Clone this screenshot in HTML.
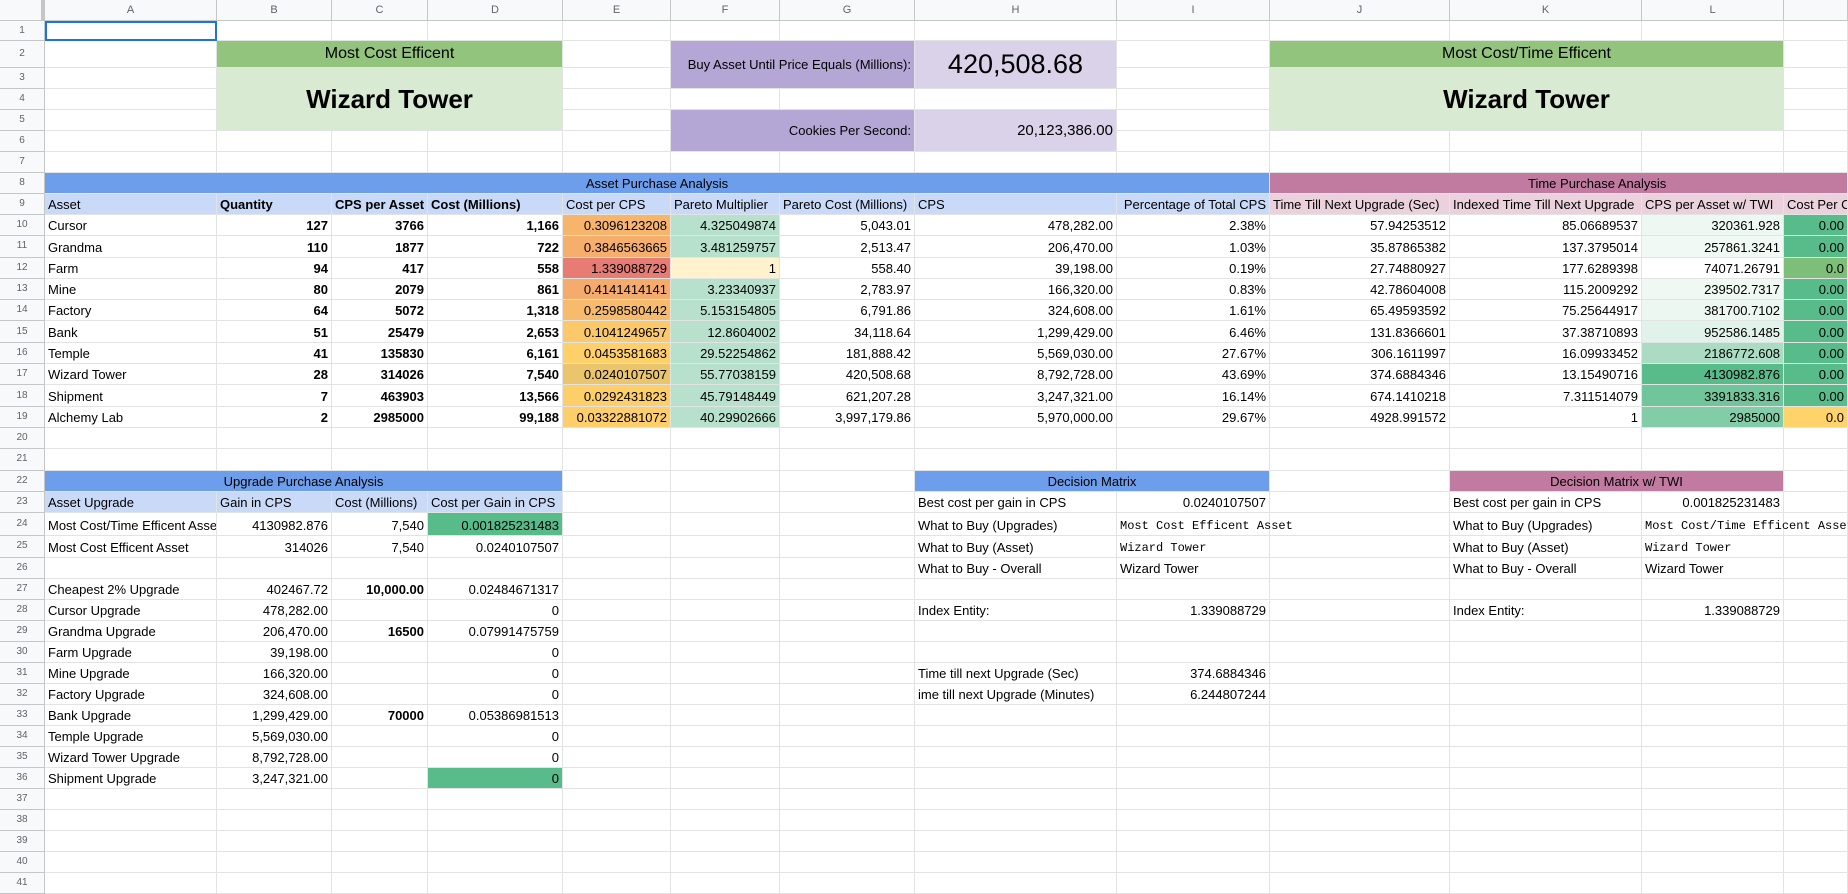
<!DOCTYPE html>
<html><head><meta charset="utf-8"><style>
*{margin:0;padding:0;box-sizing:border-box}
body{width:1848px;height:888px;overflow:hidden;background:#fff;font-family:"Liberation Sans",Arial,sans-serif;font-size:13px;color:#000}
.g{display:grid;grid-template-columns:45px 172px 115px 96px 135px 108px 109px 135px 202px 153px 180px 192px 142px 64px;
grid-template-rows:21px 20px 27px 21px 21px 21px 21px 21px 21px 21px repeat(14,21.3px) 22.5px 22.5px repeat(16,21px);width:1848px}
.g>div{border-right:1px solid #e2e3e3;border-bottom:1px solid #e2e3e3;white-space:nowrap;overflow:hidden;padding:0 3px 3px;display:flex;align-items:flex-end;line-height:1}
.h{background:#f8f9fa;color:#5f6368;justify-content:center;font-size:11px;border-color:#c4c7c5!important;align-items:center!important;padding:0!important}
.rh{background:#f8f9fa;color:#5f6368;justify-content:center;font-size:10px;border-color:#c4c7c5!important;align-items:center!important;padding:0!important}
.r{justify-content:flex-end}
.c{justify-content:center}
.vc{align-items:center!important;padding-bottom:0!important}
.b{font-weight:bold}
.m{font-family:"Liberation Mono",monospace;font-size:12px}
.ov{overflow:visible!important;position:relative;z-index:2}
.bl{background:#6d9eeb}.lb{background:#c9daf8}.pk{background:#c27ba0}.lp{background:#ead1dc}
.gr{background:#93c47d}.lg{background:#d9ead3}.pu{background:#b4a7d6}.lpu{background:#d9d2e9}
.G{background:#57bb8a}
</style></head><body><div class="g">
<div class="h" style="border-right:4px solid #c4c7c5"></div><div class="h">A</div><div class="h">B</div><div class="h">C</div><div class="h">D</div><div class="h">E</div><div class="h">F</div><div class="h">G</div><div class="h">H</div><div class="h">I</div><div class="h">J</div><div class="h">K</div><div class="h">L</div><div class="h"></div>

<div class="rh">1</div><div style="border:2px solid #1a73e8"></div><div></div><div></div><div></div><div></div><div></div><div></div><div></div><div></div><div></div><div></div><div></div><div></div>

<div class="rh">2</div><div></div><div class="gr c vc" style="grid-column:span 3;font-size:16px">Most Cost Efficent</div><div></div><div class="pu r vc" style="grid-column:span 2;grid-row:span 2;font-size:13px">Buy Asset Until Price Equals (Millions):</div><div class="lpu c vc" style="grid-row:span 2;font-size:27px">420,508.68</div><div></div><div class="gr c vc" style="grid-column:span 3;font-size:16px">Most Cost/Time Efficent</div><div></div>

<div class="rh">3</div><div></div><div class="lg c b vc" style="grid-column:span 3;grid-row:span 3;font-size:26px">Wizard Tower</div><div></div><div></div><div class="lg c b vc" style="grid-column:span 3;grid-row:span 3;font-size:26px">Wizard Tower</div><div></div>

<div class="rh">4</div><div></div><div></div><div></div><div></div><div></div><div></div><div></div>

<div class="rh">5</div><div></div><div></div><div class="pu r vc" style="grid-column:span 2;grid-row:span 2">Cookies Per Second:</div><div class="lpu r vc" style="grid-row:span 2;font-size:15px">20,123,386.00</div><div></div><div></div>

<div class="rh">6</div><div></div><div></div><div></div><div></div><div></div><div></div><div></div><div></div><div></div><div></div>

<div class="rh">7</div><div></div><div></div><div></div><div></div><div></div><div></div><div></div><div></div><div></div><div></div><div></div><div></div><div></div>

<div class="rh">8</div><div class="bl c" style="grid-column:span 9">Asset Purchase Analysis</div><div class="pk" style="grid-column:span 4;padding-left:258px">Time Purchase Analysis</div>

<div class="rh">9</div><div class="lb">Asset</div><div class="lb b">Quantity</div><div class="lb b">CPS per Asset</div><div class="lb b">Cost (Millions)</div><div class="lb">Cost per CPS</div><div class="lb">Pareto Multiplier</div><div class="lb">Pareto Cost (Millions)</div><div class="lb">CPS</div><div class="lb r">Percentage of Total CPS</div><div class="lp">Time Till Next Upgrade (Sec)</div><div class="lp">Indexed Time Till Next Upgrade</div><div class="lp">CPS per Asset w/ TWI</div><div class="lp">Cost Per C</div>

<div class="rh">10</div><div>Cursor</div><div class="r b">127</div><div class="r b">3766</div><div class="r b">1,166</div><div class="r" style="background:#f7b56b">0.3096123208</div><div class="r" style="background:#b7e1cd">4.325049874</div><div class="r">5,043.01</div><div class="r">478,282.00</div><div class="r">2.38%</div><div class="r">57.94253512</div><div class="r">85.06689537</div><div class="r" style="background:#eef8f3">320361.928</div><div class="r G">0.00</div>
<div class="rh">11</div><div>Grandma</div><div class="r b">110</div><div class="r b">1877</div><div class="r b">722</div><div class="r" style="background:#f5ae6b">0.3846563665</div><div class="r" style="background:#b7e1cd">3.481259757</div><div class="r">2,513.47</div><div class="r">206,470.00</div><div class="r">1.03%</div><div class="r">35.87865382</div><div class="r">137.3795014</div><div class="r" style="background:#f1f9f5">257861.3241</div><div class="r G">0.00</div>
<div class="rh">12</div><div>Farm</div><div class="r b">94</div><div class="r b">417</div><div class="r b">558</div><div class="r" style="background:#e67c73">1.339088729</div><div class="r" style="background:#fff2cc">1</div><div class="r">558.40</div><div class="r">39,198.00</div><div class="r">0.19%</div><div class="r">27.74880927</div><div class="r">177.6289398</div><div class="r">74071.26791</div><div class="r" style="background:#7dbf78">0.0</div>
<div class="rh">13</div><div>Mine</div><div class="r b">80</div><div class="r b">2079</div><div class="r b">861</div><div class="r" style="background:#f5ab6b">0.4141414141</div><div class="r" style="background:#b7e1cd">3.23340937</div><div class="r">2,783.97</div><div class="r">166,320.00</div><div class="r">0.83%</div><div class="r">42.78604008</div><div class="r">115.2009292</div><div class="r" style="background:#f0f8f4">239502.7317</div><div class="r G">0.00</div>
<div class="rh">14</div><div>Factory</div><div class="r b">64</div><div class="r b">5072</div><div class="r b">1,318</div><div class="r" style="background:#f8bb6b">0.2598580442</div><div class="r" style="background:#b7e1cd">5.153154805</div><div class="r">6,791.86</div><div class="r">324,608.00</div><div class="r">1.61%</div><div class="r">65.49593592</div><div class="r">75.25644917</div><div class="r" style="background:#edf7f2">381700.7102</div><div class="r G">0.00</div>
<div class="rh">15</div><div>Bank</div><div class="r b">51</div><div class="r b">25479</div><div class="r b">2,653</div><div class="r" style="background:#fcc96a">0.1041249657</div><div class="r" style="background:#b7e1cd">12.8604002</div><div class="r">34,118.64</div><div class="r">1,299,429.00</div><div class="r">6.46%</div><div class="r">131.8366601</div><div class="r">37.38710893</div><div class="r" style="background:#e0f2e9">952586.1485</div><div class="r G">0.00</div>
<div class="rh">16</div><div>Temple</div><div class="r b">41</div><div class="r b">135830</div><div class="r b">6,161</div><div class="r" style="background:#fed06a">0.0453581683</div><div class="r" style="background:#b7e1cd">29.52254862</div><div class="r">181,888.42</div><div class="r">5,569,030.00</div><div class="r">27.67%</div><div class="r">306.1611997</div><div class="r">16.09933452</div><div class="r" style="background:#abdbc3">2186772.608</div><div class="r G">0.00</div>
<div class="rh">17</div><div>Wizard Tower</div><div class="r b">28</div><div class="r b">314026</div><div class="r b">7,540</div><div class="r" style="background:#eac56c">0.0240107507</div><div class="r" style="background:#b7e1cd">55.77038159</div><div class="r">420,508.68</div><div class="r">8,792,728.00</div><div class="r">43.69%</div><div class="r">374.6884346</div><div class="r">13.15490716</div><div class="r" style="background:#57bb8a">4130982.876</div><div class="r G">0.00</div>
<div class="rh">18</div><div>Shipment</div><div class="r b">7</div><div class="r b">463903</div><div class="r b">13,566</div><div class="r" style="background:#fecf69">0.0292431823</div><div class="r" style="background:#b7e1cd">45.79148449</div><div class="r">621,207.28</div><div class="r">3,247,321.00</div><div class="r">16.14%</div><div class="r">674.1410218</div><div class="r">7.311514079</div><div class="r" style="background:#70c59b">3391833.316</div><div class="r G">0.00</div>
<div class="rh">19</div><div>Alchemy Lab</div><div class="r b">2</div><div class="r b">2985000</div><div class="r b">99,188</div><div class="r" style="background:#fdce69">0.03322881072</div><div class="r" style="background:#b7e1cd">40.29902666</div><div class="r">3,997,179.86</div><div class="r">5,970,000.00</div><div class="r">29.67%</div><div class="r">4928.991572</div><div class="r">1</div><div class="r" style="background:#82cca7">2985000</div><div class="r" style="background:#fed36a">0.0</div>

<div class="rh">20</div><div></div><div></div><div></div><div></div><div></div><div></div><div></div><div></div><div></div><div></div><div></div><div></div><div></div>
<div class="rh">21</div><div></div><div></div><div></div><div></div><div></div><div></div><div></div><div></div><div></div><div></div><div></div><div></div><div></div>

<div class="rh">22</div><div class="bl c" style="grid-column:span 4">Upgrade Purchase Analysis</div><div></div><div></div><div></div><div class="bl c" style="grid-column:span 2">Decision Matrix</div><div></div><div class="pk c" style="grid-column:span 2">Decision Matrix w/ TWI</div><div></div>
<div class="rh">23</div><div class="lb">Asset Upgrade</div><div class="lb">Gain in CPS</div><div class="lb">Cost (Millions)</div><div class="lb">Cost per Gain in CPS</div><div></div><div></div><div></div><div>Best cost per gain in CPS</div><div class="r">0.0240107507</div><div></div><div>Best cost per gain in CPS</div><div class="r">0.001825231483</div><div></div>
<div class="rh">24</div><div>Most Cost/Time Efficent Asset</div><div class="r">4130982.876</div><div class="r">7,540</div><div class="r G">0.001825231483</div><div></div><div></div><div></div><div>What to Buy (Upgrades)</div><div class="m ov">Most Cost Efficent Asset</div><div></div><div>What to Buy (Upgrades)</div><div class="m ov">Most Cost/Time Efficent Asset</div><div></div>
<div class="rh">25</div><div>Most Cost Efficent Asset</div><div class="r">314026</div><div class="r">7,540</div><div class="r">0.0240107507</div><div></div><div></div><div></div><div>What to Buy (Asset)</div><div class="m">Wizard Tower</div><div></div><div>What to Buy (Asset)</div><div class="m">Wizard Tower</div><div></div>
<div class="rh">26</div><div></div><div></div><div></div><div></div><div></div><div></div><div></div><div>What to Buy - Overall</div><div>Wizard Tower</div><div></div><div>What to Buy - Overall</div><div>Wizard Tower</div><div></div>
<div class="rh">27</div><div>Cheapest 2% Upgrade</div><div class="r">402467.72</div><div class="r b">10,000.00</div><div class="r">0.02484671317</div><div></div><div></div><div></div><div></div><div></div><div></div><div></div><div></div><div></div>
<div class="rh">28</div><div>Cursor Upgrade</div><div class="r">478,282.00</div><div></div><div class="r">0</div><div></div><div></div><div></div><div>Index Entity:</div><div class="r">1.339088729</div><div></div><div>Index Entity:</div><div class="r">1.339088729</div><div></div>
<div class="rh">29</div><div>Grandma Upgrade</div><div class="r">206,470.00</div><div class="r b">16500</div><div class="r">0.07991475759</div><div></div><div></div><div></div><div></div><div></div><div></div><div></div><div></div><div></div>
<div class="rh">30</div><div>Farm Upgrade</div><div class="r">39,198.00</div><div></div><div class="r">0</div><div></div><div></div><div></div><div></div><div></div><div></div><div></div><div></div><div></div>
<div class="rh">31</div><div>Mine Upgrade</div><div class="r">166,320.00</div><div></div><div class="r">0</div><div></div><div></div><div></div><div>Time till next Upgrade (Sec)</div><div class="r">374.6884346</div><div></div><div></div><div></div><div></div>
<div class="rh">32</div><div>Factory Upgrade</div><div class="r">324,608.00</div><div></div><div class="r">0</div><div></div><div></div><div></div><div>ime till next Upgrade (Minutes)</div><div class="r">6.244807244</div><div></div><div></div><div></div><div></div>
<div class="rh">33</div><div>Bank Upgrade</div><div class="r">1,299,429.00</div><div class="r b">70000</div><div class="r">0.05386981513</div><div></div><div></div><div></div><div></div><div></div><div></div><div></div><div></div><div></div>
<div class="rh">34</div><div>Temple Upgrade</div><div class="r">5,569,030.00</div><div></div><div class="r">0</div><div></div><div></div><div></div><div></div><div></div><div></div><div></div><div></div><div></div>
<div class="rh">35</div><div>Wizard Tower Upgrade</div><div class="r">8,792,728.00</div><div></div><div class="r">0</div><div></div><div></div><div></div><div></div><div></div><div></div><div></div><div></div><div></div>
<div class="rh">36</div><div>Shipment Upgrade</div><div class="r">3,247,321.00</div><div></div><div class="r G">0</div><div></div><div></div><div></div><div></div><div></div><div></div><div></div><div></div><div></div>
<div class="rh">37</div><div></div><div></div><div></div><div></div><div></div><div></div><div></div><div></div><div></div><div></div><div></div><div></div><div></div>
<div class="rh">38</div><div></div><div></div><div></div><div></div><div></div><div></div><div></div><div></div><div></div><div></div><div></div><div></div><div></div>
<div class="rh">39</div><div></div><div></div><div></div><div></div><div></div><div></div><div></div><div></div><div></div><div></div><div></div><div></div><div></div>
<div class="rh">40</div><div></div><div></div><div></div><div></div><div></div><div></div><div></div><div></div><div></div><div></div><div></div><div></div><div></div>
<div class="rh">41</div><div></div><div></div><div></div><div></div><div></div><div></div><div></div><div></div><div></div><div></div><div></div><div></div><div></div>
</div></body></html>
